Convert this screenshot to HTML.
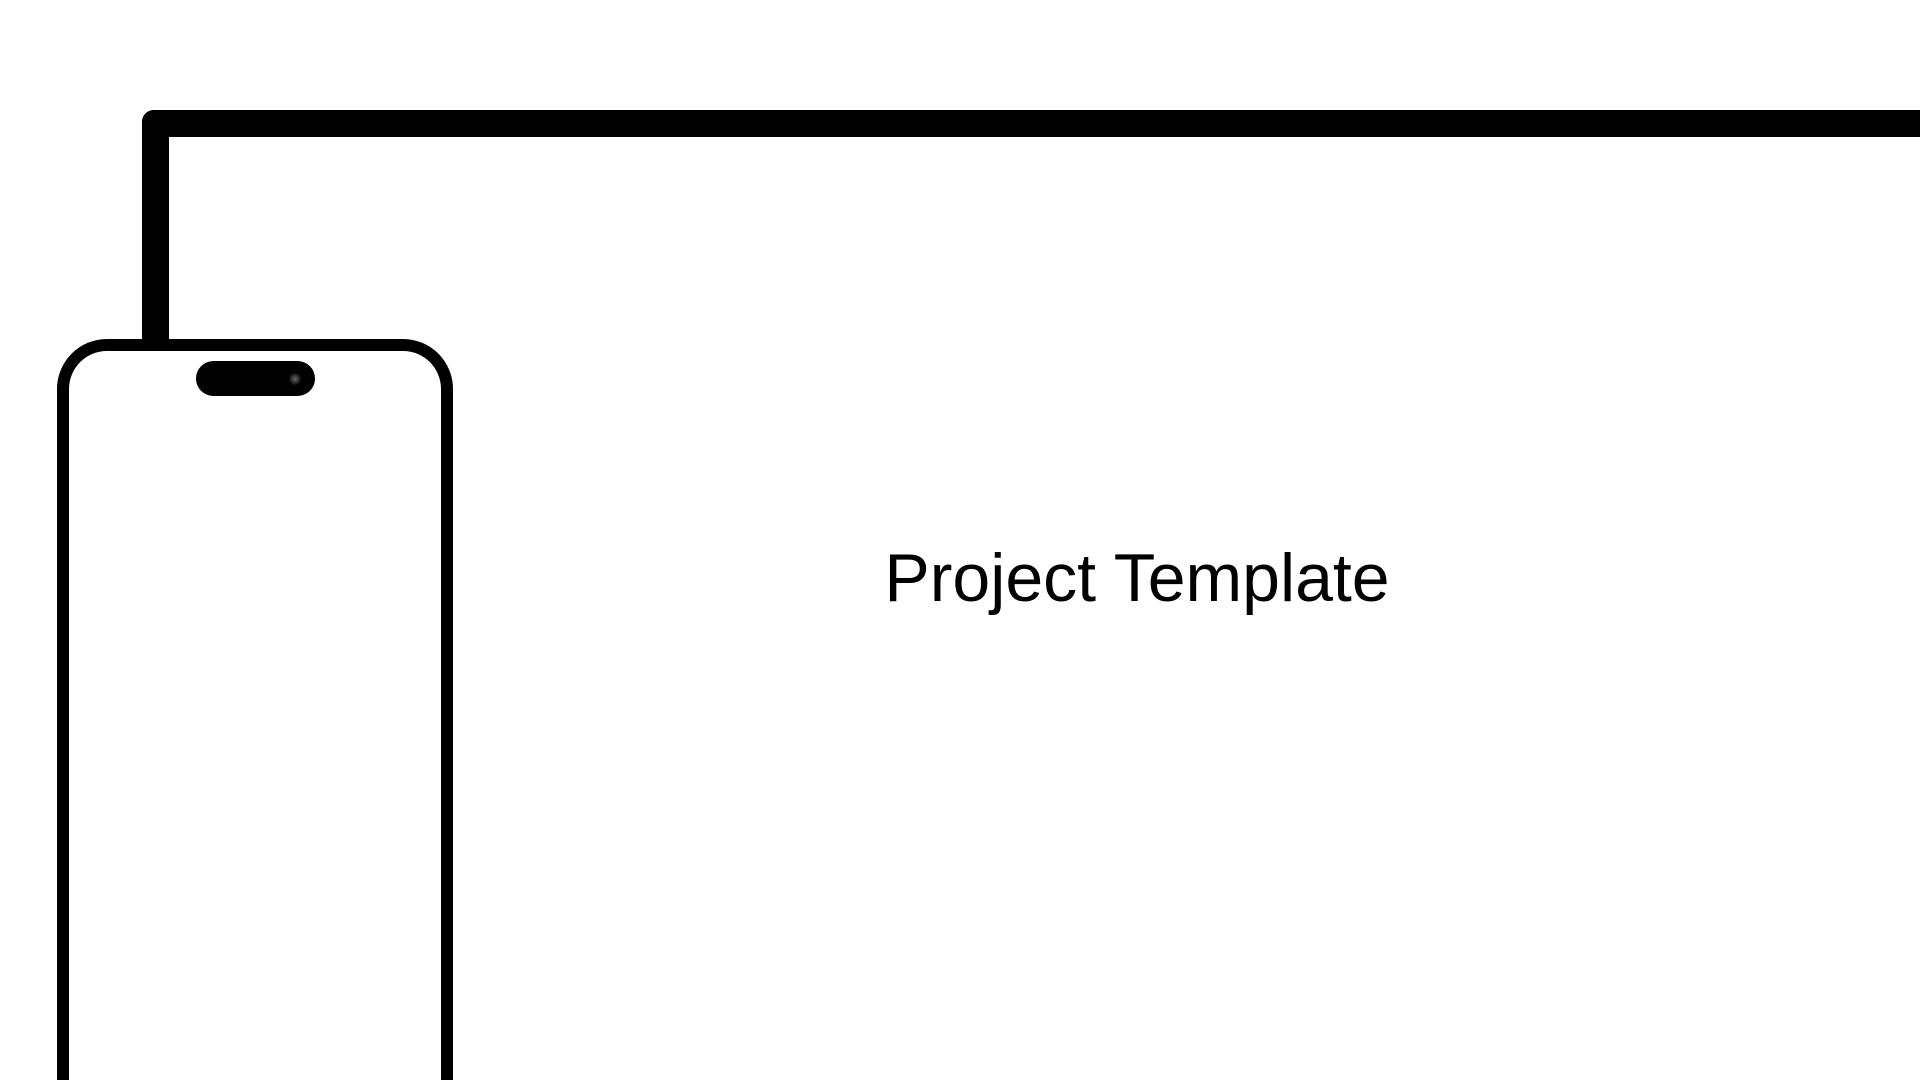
<!DOCTYPE html>
<html><head><meta charset="utf-8"><style>
html,body{margin:0;padding:0;background:#fff;width:1920px;height:1080px;overflow:hidden;position:relative}
.mon{position:absolute;left:142px;top:110px;width:1778px;height:970px;border:27px solid #000;border-right:none;border-bottom:none;border-top-left-radius:12px;box-sizing:border-box;background:#fff}
.phone{position:absolute;left:57px;top:339px;width:396px;height:741px;border:12px solid #000;border-bottom:none;border-radius:50px 50px 0 0;box-sizing:border-box;background:#fff}
.notch{position:absolute;left:196px;top:361px;width:119px;height:35px;background:#000;border-radius:18px}
.cam{position:absolute;left:289px;top:373px;width:12px;height:12px;border-radius:50%;background:radial-gradient(circle,#666 0,#333 40%,#000 80%)}
.t{position:absolute;left:737px;width:800px;top:538px;text-align:center;font-family:"Liberation Sans",sans-serif;font-size:68px;line-height:80px;color:#000}
</style></head><body>
<div class="mon"></div>
<div class="phone"></div>
<div class="notch"></div>
<div class="cam"></div>
<div class="t">Project Template</div>
</body></html>
